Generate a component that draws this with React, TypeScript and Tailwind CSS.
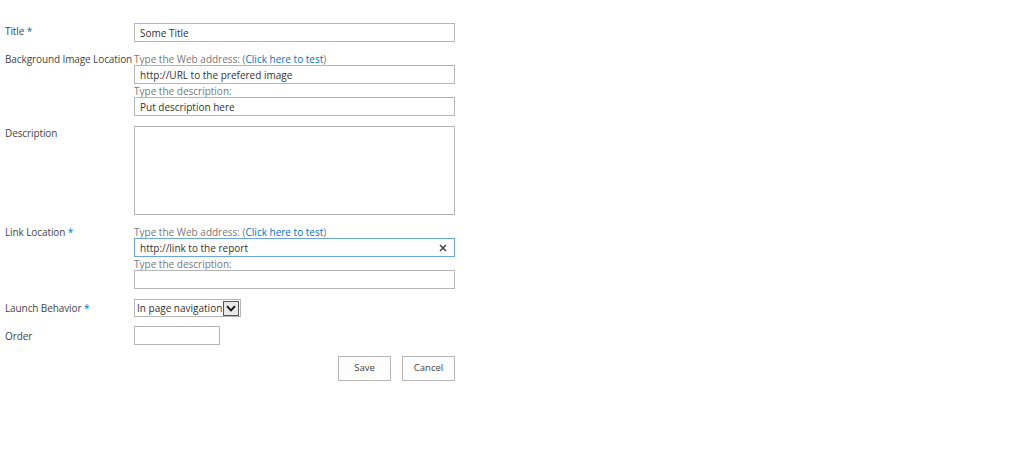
import React from "react";

const font = { fontFamily: '"Open Sans", "Liberation Sans", sans-serif' };

function Label({ text, required, pad = 0 }: { text: string; required?: boolean; pad?: number }) {
  return (
    <div
      className="w-[129px] shrink-0 whitespace-nowrap text-[10px] leading-[13px] tracking-[-0.1px] text-[#444]"
      style={{ paddingTop: pad }}
    >
      {text}
      {required && <span className="text-[#0072c6]"> *</span>}
    </div>
  );
}

function Box({
  value,
  focused,
  clear,
  className = "",
}: {
  value?: string;
  focused?: boolean;
  clear?: boolean;
  className?: string;
}) {
  return (
    <div
      className={`flex h-[19px] items-center border bg-white px-[5px] pt-[1px] text-[10px] text-[#333] ${
        focused ? "border-[#6aa6db]" : "border-[#b5b5b5]"
      } ${className}`}
    >
      <span className="flex-1 truncate">{value}</span>
      {clear && (
        <svg width="8" height="8" viewBox="0 0 8 8" className="mr-[2px]">
          <path d="M1 1 L7 7 M7 1 L1 7" stroke="#444" strokeWidth="1.5" />
        </svg>
      )}
    </div>
  );
}

function Hint({ text, link }: { text: string; link?: boolean }) {
  return (
    <div className="h-[13px] whitespace-nowrap text-[10px] leading-[15px] text-[#777]">
      {text}
      {link && (
        <>
          {" "}(<span className="text-[#0072c6]">Click here to test</span>)
        </>
      )}
    </div>
  );
}

export default function App() {
  return (
    <div className="h-[460px] w-[1024px] bg-white pl-[5px] pt-[23px]" style={font}>
      <div className="flex w-[450px] flex-col">
        <div className="flex">
          <Label text="Title" required pad={2} />
          <Box value="Some Title" className="w-[321px]" />
        </div>

        <div className="mt-[10px] flex">
          <Label text="Background Image Location" pad={1} />
          <div className="flex w-[321px] flex-col">
            <Hint text="Type the Web address:" link />
            <Box value="http://URL to the prefered image" />
            <Hint text="Type the description:" />
            <Box value="Put description here" />
          </div>
        </div>

        <div className="mt-[10px] flex">
          <Label text="Description" pad={1} />
          <div className="h-[89px] w-[321px] border border-[#b5b5b5] bg-white" />
        </div>

        <div className="mt-[10px] flex">
          <Label text="Link Location" required pad={1} />
          <div className="flex w-[321px] flex-col">
            <Hint text="Type the Web address:" link />
            <Box value="http://link to the report" focused clear />
            <Hint text="Type the description:" />
            <Box />
          </div>
        </div>

        <div className="mt-[10px] flex">
          <Label text="Launch Behavior" required pad={3} />
          <div className="flex h-[18px] w-[107px] items-center border border-[#b5b5b5] bg-white pl-[2px] pr-[1px] pt-[1px] text-[10px] text-[#333]">
            <span className="flex-1 overflow-hidden whitespace-nowrap">In page navigation</span>
            <span className="flex h-[15px] w-[16px] shrink-0 items-center justify-center border border-[#555] bg-[#e8e8e8]">
              <svg width="10" height="7" viewBox="0 0 10 7">
                <path d="M1 1.2 L5 5.4 L9 1.2" fill="none" stroke="#111" strokeWidth="1.8" />
              </svg>
            </span>
          </div>
        </div>

        <div className="mt-[9px] flex">
          <Label text="Order" pad={4} />
          <Box className="w-[86px]" />
        </div>

        <div className="mt-[11px] flex justify-end gap-[11px]">
          <button className="h-[25px] w-[53px] border border-[#b5b5b5] bg-[#fdfdfd] text-[9.5px] text-[#444]">
            Save
          </button>
          <button className="h-[25px] w-[53px] border border-[#b5b5b5] bg-[#fdfdfd] text-[9.5px] text-[#444]">
            Cancel
          </button>
        </div>
      </div>
    </div>
  );
}
